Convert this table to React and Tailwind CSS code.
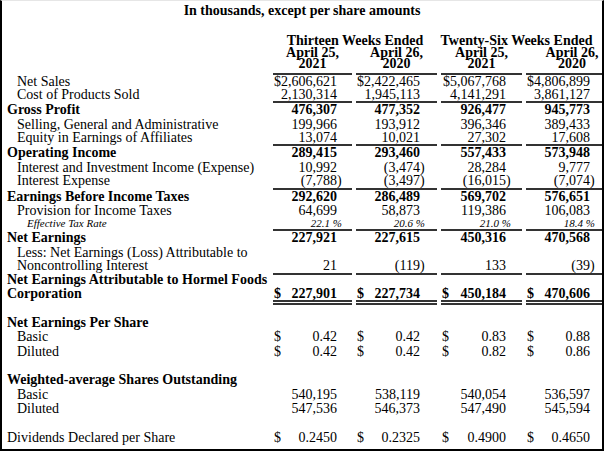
import React from "react";

const grid = "grid grid-cols-[267px_79px_81px_81px_92px] gap-x-[4px]";
const pads = ["pr-[10px]", "pr-[12px]", "pr-[11px]", "pr-[23px]"];
const rules = {
  1: "border-b-2 border-[#333]",
  2: "border-b-[5px] border-double border-[#333]",
};

const body = [
  { label: "Net Sales", indent: 1, vals: ["$2,606,621", "$2,422,465", "$5,067,768", "$4,806,899"] },
  { label: "Cost of Products Sold", indent: 1, rule: 1, vals: ["2,130,314", "1,945,113", "4,141,291", "3,861,127"] },
  { label: "Gross Profit", bold: true, vals: ["476,307", "477,352", "926,477", "945,773"] },
  { label: "Selling, General and Administrative", indent: 1, vals: ["199,966", "193,912", "396,346", "389,433"] },
  { label: "Equity in Earnings of Affiliates", indent: 1, rule: 1, vals: ["13,074", "10,021", "27,302", "17,608"] },
  { label: "Operating Income", bold: true, vals: ["289,415", "293,460", "557,433", "573,948"] },
  { label: "Interest and Investment Income (Expense)", indent: 1, vals: ["10,992", "(3,474)", "28,284", "9,777"] },
  { label: "Interest Expense", indent: 1, rule: 1, vals: ["(7,788)", "(3,497)", "(16,015)", "(7,074)"] },
  { label: "Earnings Before Income Taxes", bold: true, vals: ["292,620", "286,489", "569,702", "576,651"] },
  { label: "Provision for Income Taxes", indent: 1, vals: ["64,699", "58,873", "119,386", "106,083"] },
  { label: "Effective Tax Rate", indent: 2, rule: 1, pct: true, vals: ["22.1 %", "20.6 %", "21.0 %", "18.4 %"] },
  { label: "Net Earnings", bold: true, vals: ["227,921", "227,615", "450,316", "470,568"] },
  { label: ["Less: Net Earnings (Loss) Attributable to", "Noncontrolling Interest"], indent: 1, rule: 1, vals: ["21", "(119)", "133", "(39)"] },
  { label: ["Net Earnings Attributable to Hormel Foods", "Corporation"], bold: true, rule: 2, dollar: true, vals: ["227,901", "227,734", "450,184", "470,606"] },
];

const lower = [
  { label: "Net Earnings Per Share", bold: true },
  { label: "Basic", indent: 1, dollar: true, vals: ["0.42", "0.42", "0.83", "0.88"] },
  { label: "Diluted", indent: 1, dollar: true, vals: ["0.42", "0.42", "0.82", "0.86"] },
  null,
  { label: "Weighted-average Shares Outstanding", bold: true },
  { label: "Basic", indent: 1, vals: ["540,195", "538,119", "540,054", "536,597"] },
  { label: "Diluted", indent: 1, vals: ["547,536", "546,373", "547,490", "545,594"] },
  null,
  { label: "Dividends Declared per Share", dollar: true, vals: ["0.2450", "0.2325", "0.4900", "0.4650"] },
];

function Num({ v }) {
  const close = v.endsWith(")");
  return (
    <span className="whitespace-nowrap">
      {close ? v.slice(0, -1) : v}
      <span className="inline-block w-[5px]">{close ? ")" : ""}</span>
    </span>
  );
}

function Row({ r, h = "h-[14.4px]" }) {
  const two = Array.isArray(r.label);
  const height = two ? (r.rule === 2 ? "h-[30.5px]" : "h-[29px]") : r.pct ? "h-[13px]" : h;
  const pad = r.indent === 2 ? "pl-[25px]" : r.indent === 1 ? "pl-[15px]" : "pl-[5px]";
  const lead = two ? "leading-[13.5px]" : "leading-[14.4px]";
  const align = two ? "items-end" : "items-center";
  const ghost = r.rule === 1 ? "border-b-2 border-transparent" : r.rule === 2 ? "border-b-[5px] border-transparent" : "";
  return (
    <div className={`${grid} ${r.bold ? "font-bold" : ""}`}>
      <div className={`${height} ${ghost} ${pad} ${align} ${lead} flex whitespace-nowrap`}>
        {two ? (
          <span>
            {r.label[0]}
            <br />
            {r.label[1]}
          </span>
        ) : (
          <span className={r.pct ? "text-[11px] italic leading-[13px]" : ""}>{r.label}</span>
        )}
      </div>
      {(r.vals || []).map((v, i) => (
        <div
          key={i}
          className={`${height} ${rules[r.rule] || ""} ${pads[i]} ${align} ${lead} flex ${
            r.dollar ? "justify-between pl-[1px]" : "justify-end"
          }`}
        >
          {r.dollar && <span>$</span>}
          {r.pct ? <span className="text-[11px] italic leading-[13px]">{v}</span> : <Num v={v} />}
        </div>
      ))}
    </div>
  );
}

export default function App() {
  return (
    <div className="w-[604px] h-[451px] overflow-hidden bg-white text-black border-l-2 border-r-2 border-b-2 border-black border-t border-t-[#e6e6e6] font-['Liberation_Serif','Times_New_Roman',serif] text-[14px]">
      <div className="w-max">
        <div className="h-[19px] leading-[19px] font-bold text-center w-[600px]">
          In thousands, except per share amounts
        </div>

        <div className={`${grid} mt-[14.5px] font-bold`}>
          <div />
          <div className="col-span-2 h-[12px] leading-[12px] flex justify-center whitespace-nowrap">
            Thirteen Weeks Ended
          </div>
          <div className="col-span-2 h-[12px] leading-[12px] flex justify-center whitespace-nowrap pr-[26px]">
            Twenty-Six Weeks Ended
          </div>
          <div />
          {[
            ["April 25,", "2021"],
            ["April 26,", "2020"],
            ["April 25,", "2021"],
            ["April 26,", "2020"],
          ].map(([a, b], i) => (
            <div key={i} className="text-center pt-[1.5px] pb-[3.5px] border-b-2 border-[#333]">
              <div className="h-[10.5px] leading-[10.5px]">{a}</div>
              <div className="h-[10.5px] leading-[10.5px]">{b}</div>
            </div>
          ))}
        </div>

        {body.map((r, i) => (
          <Row key={i} r={r} />
        ))}

        <div className="h-[10.5px]" />

        {lower.map((r, i) =>
          r ? <Row key={i} r={r} /> : <div key={i} className="h-[14.4px]" />
        )}
      </div>
    </div>
  );
}
